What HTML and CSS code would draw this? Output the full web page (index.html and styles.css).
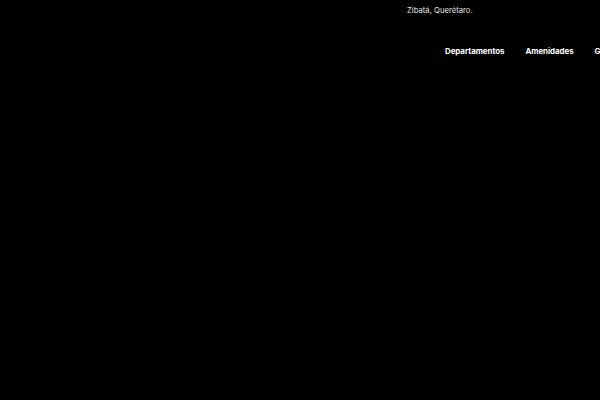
FILE: index.html
```html
<!DOCTYPE html>
<html lang="es">
<head>
<meta charset="utf-8">
<title>Zibatá</title>
<link rel="stylesheet" href="styles.css">
</head>
<body>
<header class="header">
  <div class="location">Zibatá, Querétaro.</div>
  <nav class="nav">
    <a class="nav-link" href="#">Departamentos</a>
    <a class="nav-link" href="#">Amenidades</a>
    <a class="nav-link" href="#">Galería</a>
    <a class="nav-link" href="#">Contacto</a>
  </nav>
</header>
</body>
</html>
```
FILE: styles.css
```css
html, body {
  margin: 0;
  padding: 0;
  background: #000;
  width: 600px;
  height: 400px;
  overflow: hidden;
}
.header {
  display: flex;
  flex-direction: column;
  font-family: Inter, "Liberation Sans", sans-serif;
  color: #fff;
}
.location {
  padding: 5px 0 0 407px;
  font-size: 7.7px;
  line-height: 11px;
  color: #e6e6e6;
}
.nav {
  display: flex;
  gap: 21px;
  padding: 30px 0 0 445px;
  white-space: nowrap;
}
.nav-link {
  color: #fff;
  text-decoration: none;
  font-weight: 700;
  font-size: 7.9px;
  letter-spacing: -0.03px;
  line-height: 11px;
  flex: none;
}
```
